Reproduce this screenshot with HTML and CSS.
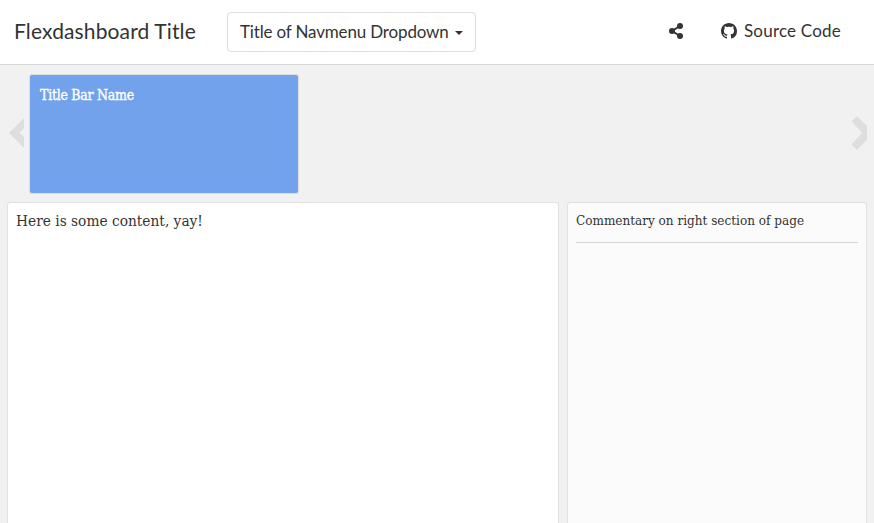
FILE: index.html
```html
<!DOCTYPE html>
<html lang="en">
<head>
<meta charset="utf-8">
<title>Flexdashboard Title</title>
<link rel="stylesheet" href="styles.css">
</head>
<body>
<header class="navbar">
  <span class="brand">Flexdashboard Title</span>
  <button class="dropdown" type="button"><span>Title of Navmenu Dropdown</span><i class="caret"></i></button>
  <nav class="nav-right">
    <a class="share" aria-label="Share">
      <svg width="14" height="16" viewBox="0 0 14 16"><path d="M11 3 3 8l8 5" fill="none" stroke="#333" stroke-width="2"/><g fill="#333"><circle cx="11" cy="3" r="3"/><circle cx="3" cy="8" r="3"/><circle cx="11" cy="13" r="3"/></g></svg>
    </a>
    <a class="source">
      <svg width="16" height="16" viewBox="0 0 16 16"><path fill="#333" d="M8 0C3.58 0 0 3.58 0 8c0 3.54 2.29 6.53 5.47 7.59.4.07.55-.17.55-.38 0-.19-.01-.82-.01-1.49-2.01.37-2.53-.49-2.69-.94-.09-.23-.48-.94-.82-1.13-.28-.15-.68-.52-.01-.53.63-.01 1.08.58 1.23.82.72 1.21 1.87.87 2.33.66.07-.52.28-.87.51-1.07-1.78-.2-3.64-.89-3.64-3.95 0-.87.31-1.59.82-2.15-.08-.2-.36-1.02.08-2.12 0 0 .67-.21 2.2.82.64-.18 1.32-.27 2-.27s1.36.09 2 .27c1.53-1.04 2.2-.82 2.2-.82.44 1.1.16 1.92.08 2.12.51.56.82 1.27.82 2.15 0 3.07-1.87 3.75-3.65 3.95.29.25.54.73.54 1.48 0 1.07-.01 1.93-.01 2.2 0 .21.15.46.55.38A8.01 8.01 0 0 0 16 8c0-4.42-3.58-8-8-8z"/></svg>
      <span>Source Code</span>
    </a>
  </nav>
</header>
<main>
  <section class="storyboard">
    <svg class="arrow" width="15" height="32" viewBox="0 0 15 32"><path fill="#dedede" d="M0 16 15 1v10l-4.5 5 4.5 4v11z"/></svg>
    <div class="tile"><span>Title Bar Name</span></div>
    <svg class="arrow next" width="15" height="34" viewBox="0 0 15 34"><path fill="#dedede" d="M.7 4.2 3.7 1.2q1.2-1.2 2.5 0L15 10v14l-8.8 8.8q-1.3 1.2-2.5 0L.7 29.8q-1.2-1.2 0-2.5L10 17.1.7 6.7q-1.2-1.3 0-2.5z"/></svg>
  </section>
  <section class="content">
    <article class="frame"><span>Here is some content, yay!</span></article>
    <aside class="commentary"><p><span>Commentary on right section of page</span></p></aside>
  </section>
</main>
</body>
</html>
```

FILE: styles.css
```css
* { box-sizing: border-box; }
body { margin: 0; height: 523px; overflow: hidden; background: #f1f1f1; color: #333; font-family: "DejaVu Serif Condensed", "DejaVu Serif", serif; display: flex; flex-direction: column; }
.navbar { height: 65px; flex: none; display: flex; align-items: center; padding: 0 33px 0 14px; background: #fff; border-bottom: 1px solid #d7d7d7; font-family: Lato, sans-serif; font-size: 17px; }
.brand { width: 213px; padding-bottom: 4px; font-size: 21px; letter-spacing: .13px; white-space: nowrap; }
.dropdown { width: 249px; height: 40px; padding: 0 12px 2px; display: flex; align-items: center; justify-content: space-between; background: #fff; border: 1px solid #ddd; border-radius: 4px; color: inherit; font: inherit; letter-spacing: -.16px; white-space: nowrap; }
.caret { border: 4px solid transparent; border-top-color: #333; border-bottom: 0; margin-top: 4px; }
.nav-right { margin-left: auto; padding-bottom: 2px; display: flex; align-items: center; gap: 38px; }
.nav-right a { display: flex; align-items: center; }
.source { width: 120px; gap: 7px; letter-spacing: .2px; white-space: nowrap; }
.source span { padding-bottom: 1px; }
main { flex: 1; display: flex; flex-direction: column; padding: 9px 7px 0; }
.storyboard { display: flex; height: 120px; flex: none; align-items: flex-start; }
.arrow { flex: none; margin: 43px 0 0 2px; }
.next { margin: 42px 0 0 auto; }
.tile { width: 270px; height: 120px; margin-left: 5px; padding: 11px 10px; background: #71a2eb; border: 1px solid #dedfe2; border-radius: 3px; color: #fff; font-size: 14px; line-height: 18px; letter-spacing: -.27px; -webkit-text-stroke: .35px #fff; }
.content { flex: 1; display: flex; gap: 8px; margin-top: 8px; }
.frame, .commentary { border: 1px solid #e1e1e1; border-bottom: 0; border-radius: 3px 3px 0 0; padding: 8px; white-space: nowrap; }
.frame { width: 552px; background: #fff; font-size: 15.3px; line-height: 21px; }
.commentary { width: 300px; background: #fbfbfb; font-size: 13.4px; }
.commentary p { margin: 0; height: 32px; line-height: 20px; border-bottom: 1px solid #d5d5d5; }
```
